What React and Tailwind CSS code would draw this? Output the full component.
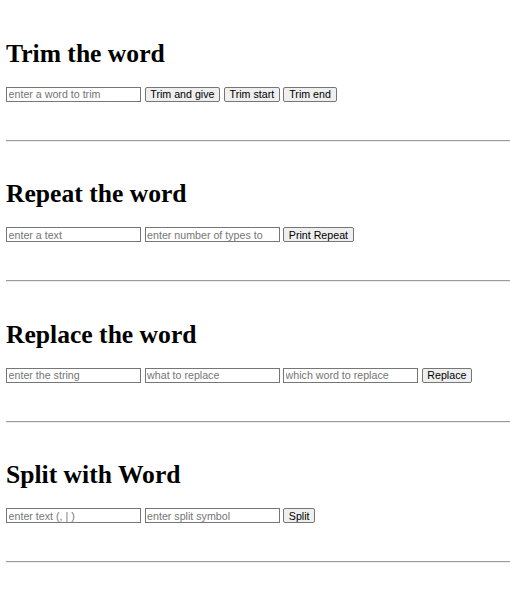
const sections = [
  {
    title: 'Trim the word',
    inputs: ['enter a word to trim'],
    buttons: ['Trim and give', 'Trim start', 'Trim end'],
  },
  {
    title: 'Repeat the word',
    inputs: ['enter a text', 'enter number of types to'],
    buttons: ['Print Repeat'],
  },
  {
    title: 'Replace the word',
    inputs: ['enter the string', 'what to replace', 'which word to replace'],
    buttons: ['Replace'],
  },
  {
    title: 'Split with Word',
    inputs: ['enter text (, | )', 'enter split symbol'],
    buttons: ['Split'],
  },
];

function Section({ title, inputs, buttons }) {
  return (
    <div className="pt-[37.4px]">
      <h1 className="pl-[6px] text-[25.6px] leading-[30px] font-bold text-black font-['Liberation_Serif',serif]">
        {title}
      </h1>
      <div className="mt-[18px] pl-[6px] flex items-start gap-[3.5px] font-['Liberation_Sans',Arial,sans-serif] text-[10.67px]">
        {inputs.map((p) => (
          <input
            key={p}
            type="text"
            placeholder={p}
            className="w-[135px] h-[15px] box-border border border-[#767676] bg-white px-[1.6px] py-0 text-[10.67px] leading-[12px] text-black placeholder:text-[#757575] outline-none"
          />
        ))}
        {buttons.map((b) => (
          <button
            key={b}
            className="h-[15px] box-border border border-[#767676] rounded-[2px] bg-[#efefef] px-[4.8px] py-0 text-[10.67px] leading-[12px] text-black whitespace-nowrap"
          >
            {b}
          </button>
        ))}
      </div>
      <div className="mt-[38px] ml-[6px] border-t border-t-[#9c9c9c] border-b border-b-[#ececec]" />
    </div>
  );
}

export default function App() {
  return (
    <div className="min-h-screen bg-white pt-[1.5px]">
      {sections.map((s) => (
        <Section key={s.title} {...s} />
      ))}
    </div>
  );
}
